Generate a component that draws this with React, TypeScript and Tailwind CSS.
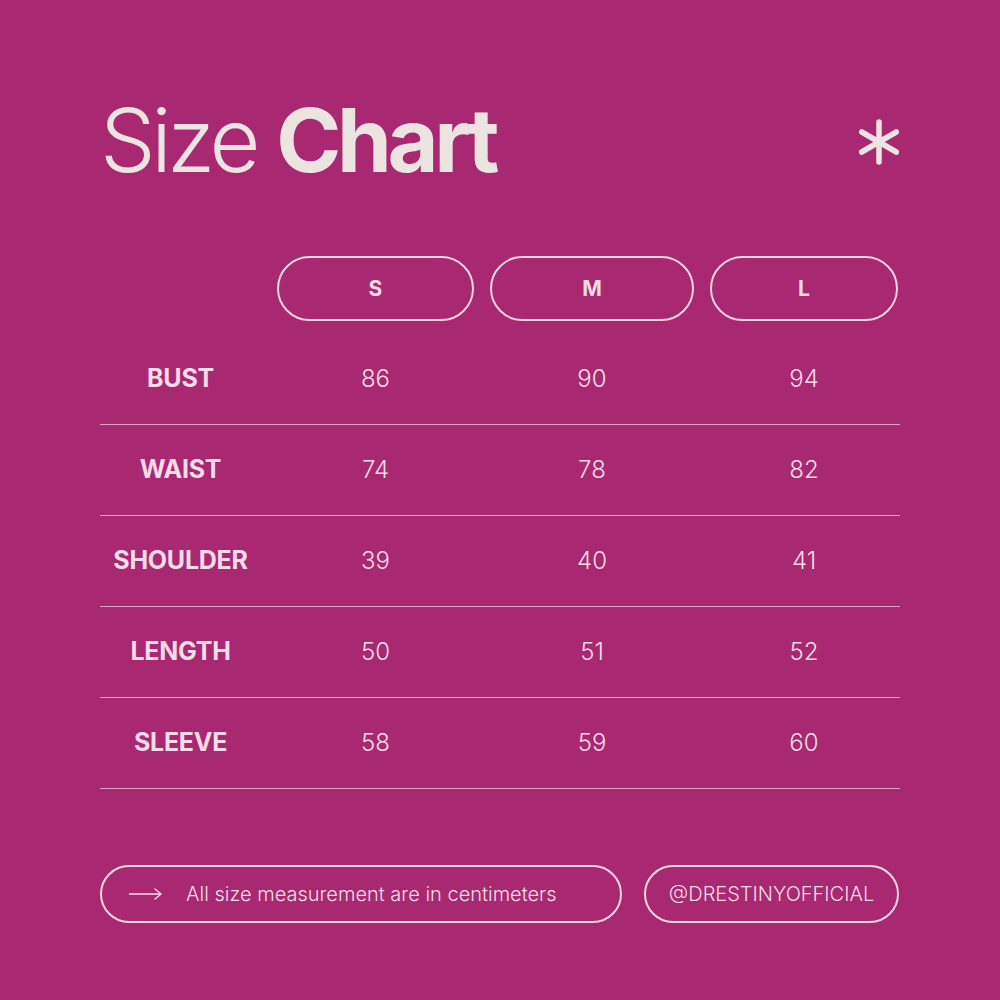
const SIZES = ["S", "M", "L"];

const ROWS = [
  { label: "BUST", values: [86, 90, 94] },
  { label: "WAIST", values: [74, 78, 82] },
  { label: "SHOULDER", values: [39, 40, 41] },
  { label: "LENGTH", values: [50, 51, 52] },
  { label: "SLEEVE", values: [58, 59, 60] },
];

const GRID = "grid grid-cols-[161px_197px_204px_188px] gap-x-4";

function Asterisk() {
  return (
    <svg width="48" height="48" viewBox="0 0 48 48" className="text-[#ece4e0]">
      <g stroke="currentColor" strokeWidth="5.5" strokeLinecap="round">
        <line x1="24" y1="4" x2="24" y2="44" />
        <line x1="6.7" y1="14" x2="41.3" y2="34" />
        <line x1="6.7" y1="34" x2="41.3" y2="14" />
      </g>
    </svg>
  );
}

function Arrow() {
  return (
    <svg width="34" height="12" viewBox="0 0 34 12" fill="none" className="text-[#f3dde7]">
      <path d="M0 6H32M26 1L32 6L26 11" stroke="currentColor" strokeWidth="1.4" strokeLinecap="round" strokeLinejoin="round" />
    </svg>
  );
}

export default function App() {
  return (
    <div className="w-[1000px] h-[1000px] bg-[#a82872] px-[100px] pt-[96px] font-['Inter',sans-serif] text-[#ece4e0]">
      {/* Header */}
      <div className="flex items-center justify-between">
        <h1 className="text-[88px] leading-none tracking-[-0.05em]">
          <span className="font-light">Size </span>
          <span className="font-bold">Chart</span>
        </h1>
        <div className="mr-[-3px] mt-[4px]">
          <Asterisk />
        </div>
      </div>

      {/* Size pills */}
      <div className={`${GRID} mt-[72px]`}>
        <div />
        {SIZES.map((s) => (
          <div
            key={s}
            className="h-[65px] rounded-full border-2 border-[#f0d5e2] flex items-center justify-center text-[21px] font-bold text-[#f5dce8]"
          >
            {s}
          </div>
        ))}
      </div>

      {/* Rows */}
      <div className="mt-[13px]">
        {ROWS.map((row) => (
          <div key={row.label} className={`${GRID} h-[91px] items-center border-b border-[#dca6c2]`}>
            <div className="text-center text-[25px] font-bold text-[#f5dce8] tracking-[-0.01em]">{row.label}</div>
            {row.values.map((v, i) => (
              <div key={i} className="text-center text-[24px] font-light text-[#f3dde7]">
                {v}
              </div>
            ))}
          </div>
        ))}
      </div>

      {/* Footer */}
      <div className="mt-[76px] flex gap-[22px]">
        <div className="w-[522px] h-[58px] rounded-full border-2 border-[#f0d5e2] flex items-center pl-[27px] gap-[23px]">
          <Arrow />
          <span className="text-[20px] font-light text-[#f3dde7]">All size measurement are in centimeters</span>
        </div>
        <div className="w-[255px] h-[58px] rounded-full border-2 border-[#f0d5e2] flex items-center justify-center">
          <span className="text-[20px] font-light text-[#f3dde7]">@DRESTINYOFFICIAL</span>
        </div>
      </div>
    </div>
  );
}
